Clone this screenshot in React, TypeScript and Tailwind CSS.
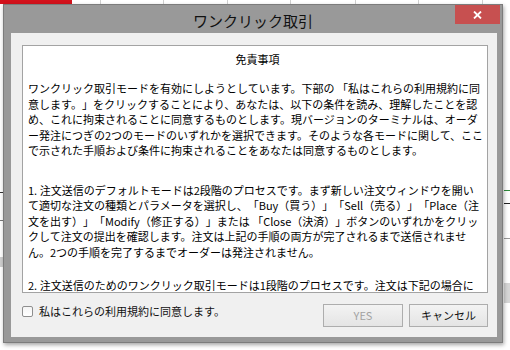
import React from "react";

const FONT = {
  fontFamily: '"Noto Sans CJK JP", "Noto Sans", "Liberation Sans", sans-serif',
};

const para1 = [
  "ワンクリック取引モードを有効にしようとしています。下部の 「私はこれらの利用規約に同",
  "意します。」をクリックすることにより、あなたは、以下の条件を読み、理解したことを認",
  "め、これに拘束されることに同意するものとします。現バージョンのターミナルは、オーダ",
  "ー発注につぎの2つのモードのいずれかを選択できます。そのような各モードに関して、ここ",
  "で示された手順および条件に拘束されることをあなたは同意するものとします。",
];

const para2 = [
  "1. 注文送信のデフォルトモードは2段階のプロセスです。まず新しい注文ウィンドウを開い",
  "て適切な注文の種類とパラメータを選択し、「Buy（買う）」「Sell（売る）」「Place（注",
  "文を出す）」「Modify（修正する）」または 「Close（決済）」ボタンのいずれかをクリッ",
  "クして注文の提出を確認します。注文は上記の手順の両方が完了されるまで送信されませ",
  "ん。2つの手順を完了するまでオーダーは発注されません。",
];

const para3 = [
  "2. 注文送信のためのワンクリック取引モードは1段階のプロセスです。注文は下記の場合に",
];

function Lines({ lines, className }: { lines: string[]; className?: string }) {
  return (
    <div className={className}>
      {lines.map((l) => (
        <div key={l} className="whitespace-nowrap">
          {l}
        </div>
      ))}
    </div>
  );
}

export default function App() {
  return (
    <div
      className="relative w-[510px] h-[350px] overflow-hidden bg-white [text-spacing-trim:space-all]"
      style={FONT}
    >
      {/* background terminal behind the dialog */}
      <div className="absolute left-0 top-0 w-[72px] h-[4px] bg-[#d3121c]" />
      {[100, 163, 227, 290, 355, 418, 482].map((x) => (
        <div
          key={x}
          className="absolute top-0 h-[4px] w-px bg-[#d0d0d0]"
          style={{ left: x }}
        />
      ))}
      <div className="absolute left-0 top-[192px] w-[3px] h-px bg-[#333]" />
      <div className="absolute left-0 top-[220px] w-[3px] h-px bg-[#777]" />
      <div className="absolute left-0 top-[257px] w-[3px] h-[10px] bg-[#cfcfcf]" />
      <div className="absolute right-0 top-[190px] w-[6px] h-px bg-[#2e8b3a]" />
      <div className="absolute right-0 top-[203px] w-[6px] h-px bg-[#222]" />
      <div className="absolute right-0 top-[238px] w-[6px] h-px bg-[#999]" />
      <div className="absolute right-0 top-[283px] w-[6px] h-[20px] bg-[#d6d6d6]" />

      {/* dialog window */}
      <div className="absolute left-[3px] top-[4px] w-[500px] h-[339px] bg-[#999999] border border-[#7c7c7c] shadow-[1px_2px_4px_rgba(0,0,0,0.35)] flex flex-col">
        <div className="relative h-[28px] flex items-center justify-center">
          <span className="text-[15px] leading-none text-[#111] pt-[2px]">
            ワンクリック取引
          </span>
          <button
            type="button"
            className="absolute right-[2px] top-0 w-[45px] h-[19px] bg-[#c75050] flex items-center justify-center"
          >
            <svg width="9" height="8" viewBox="0 0 9 8">
              <path
                d="M1 0.5 L8 7.5 M8 0.5 L1 7.5"
                stroke="white"
                strokeWidth="1.8"
              />
            </svg>
          </button>
        </div>

        <div className="flex-1 ml-[7px] mr-[5px] mb-[5px] bg-[#f0f0f0] flex flex-col pl-[11px] pr-[9px] pt-[12px] pb-[10px]">
          <div className="h-[248px] bg-white border border-[#a3a3a3] overflow-hidden pl-[5px] pt-[5px] text-[11px] leading-[15.5px] text-black">
            <div className="text-center leading-[16px]">免責事項</div>
            <Lines lines={para1} className="mt-[14px]" />
            <Lines lines={para2} className="mt-[24px]" />
            <Lines lines={para3} className="mt-[18px]" />
          </div>

          <div className="mt-[11px] h-[23px] flex items-start">
            <div className="flex items-start gap-[6px] mt-[2px]">
              <span className="w-[11px] h-[11px] rounded-[2px] border border-[#8e8e8e] bg-gradient-to-b from-[#f4f4f4] to-white" />
              <span className="text-[11px] leading-[12px] text-[#111] -mt-[1px]">
                私はこれらの利用規約に同意します。
              </span>
            </div>
            <div className="ml-auto flex gap-[6px]">
              <button
                type="button"
                className="w-[80px] h-[23px] border border-[#adadad] bg-gradient-to-b from-[#f3f3f3] to-[#e4e4e4] text-[11px] text-[#a2a2a2]"
              >
                YES
              </button>
              <button
                type="button"
                className="w-[79px] h-[23px] border border-[#adadad] bg-gradient-to-b from-[#f3f3f3] to-[#e4e4e4] text-[11px] text-[#111]"
              >
                キャンセル
              </button>
            </div>
          </div>
        </div>
      </div>
    </div>
  );
}
